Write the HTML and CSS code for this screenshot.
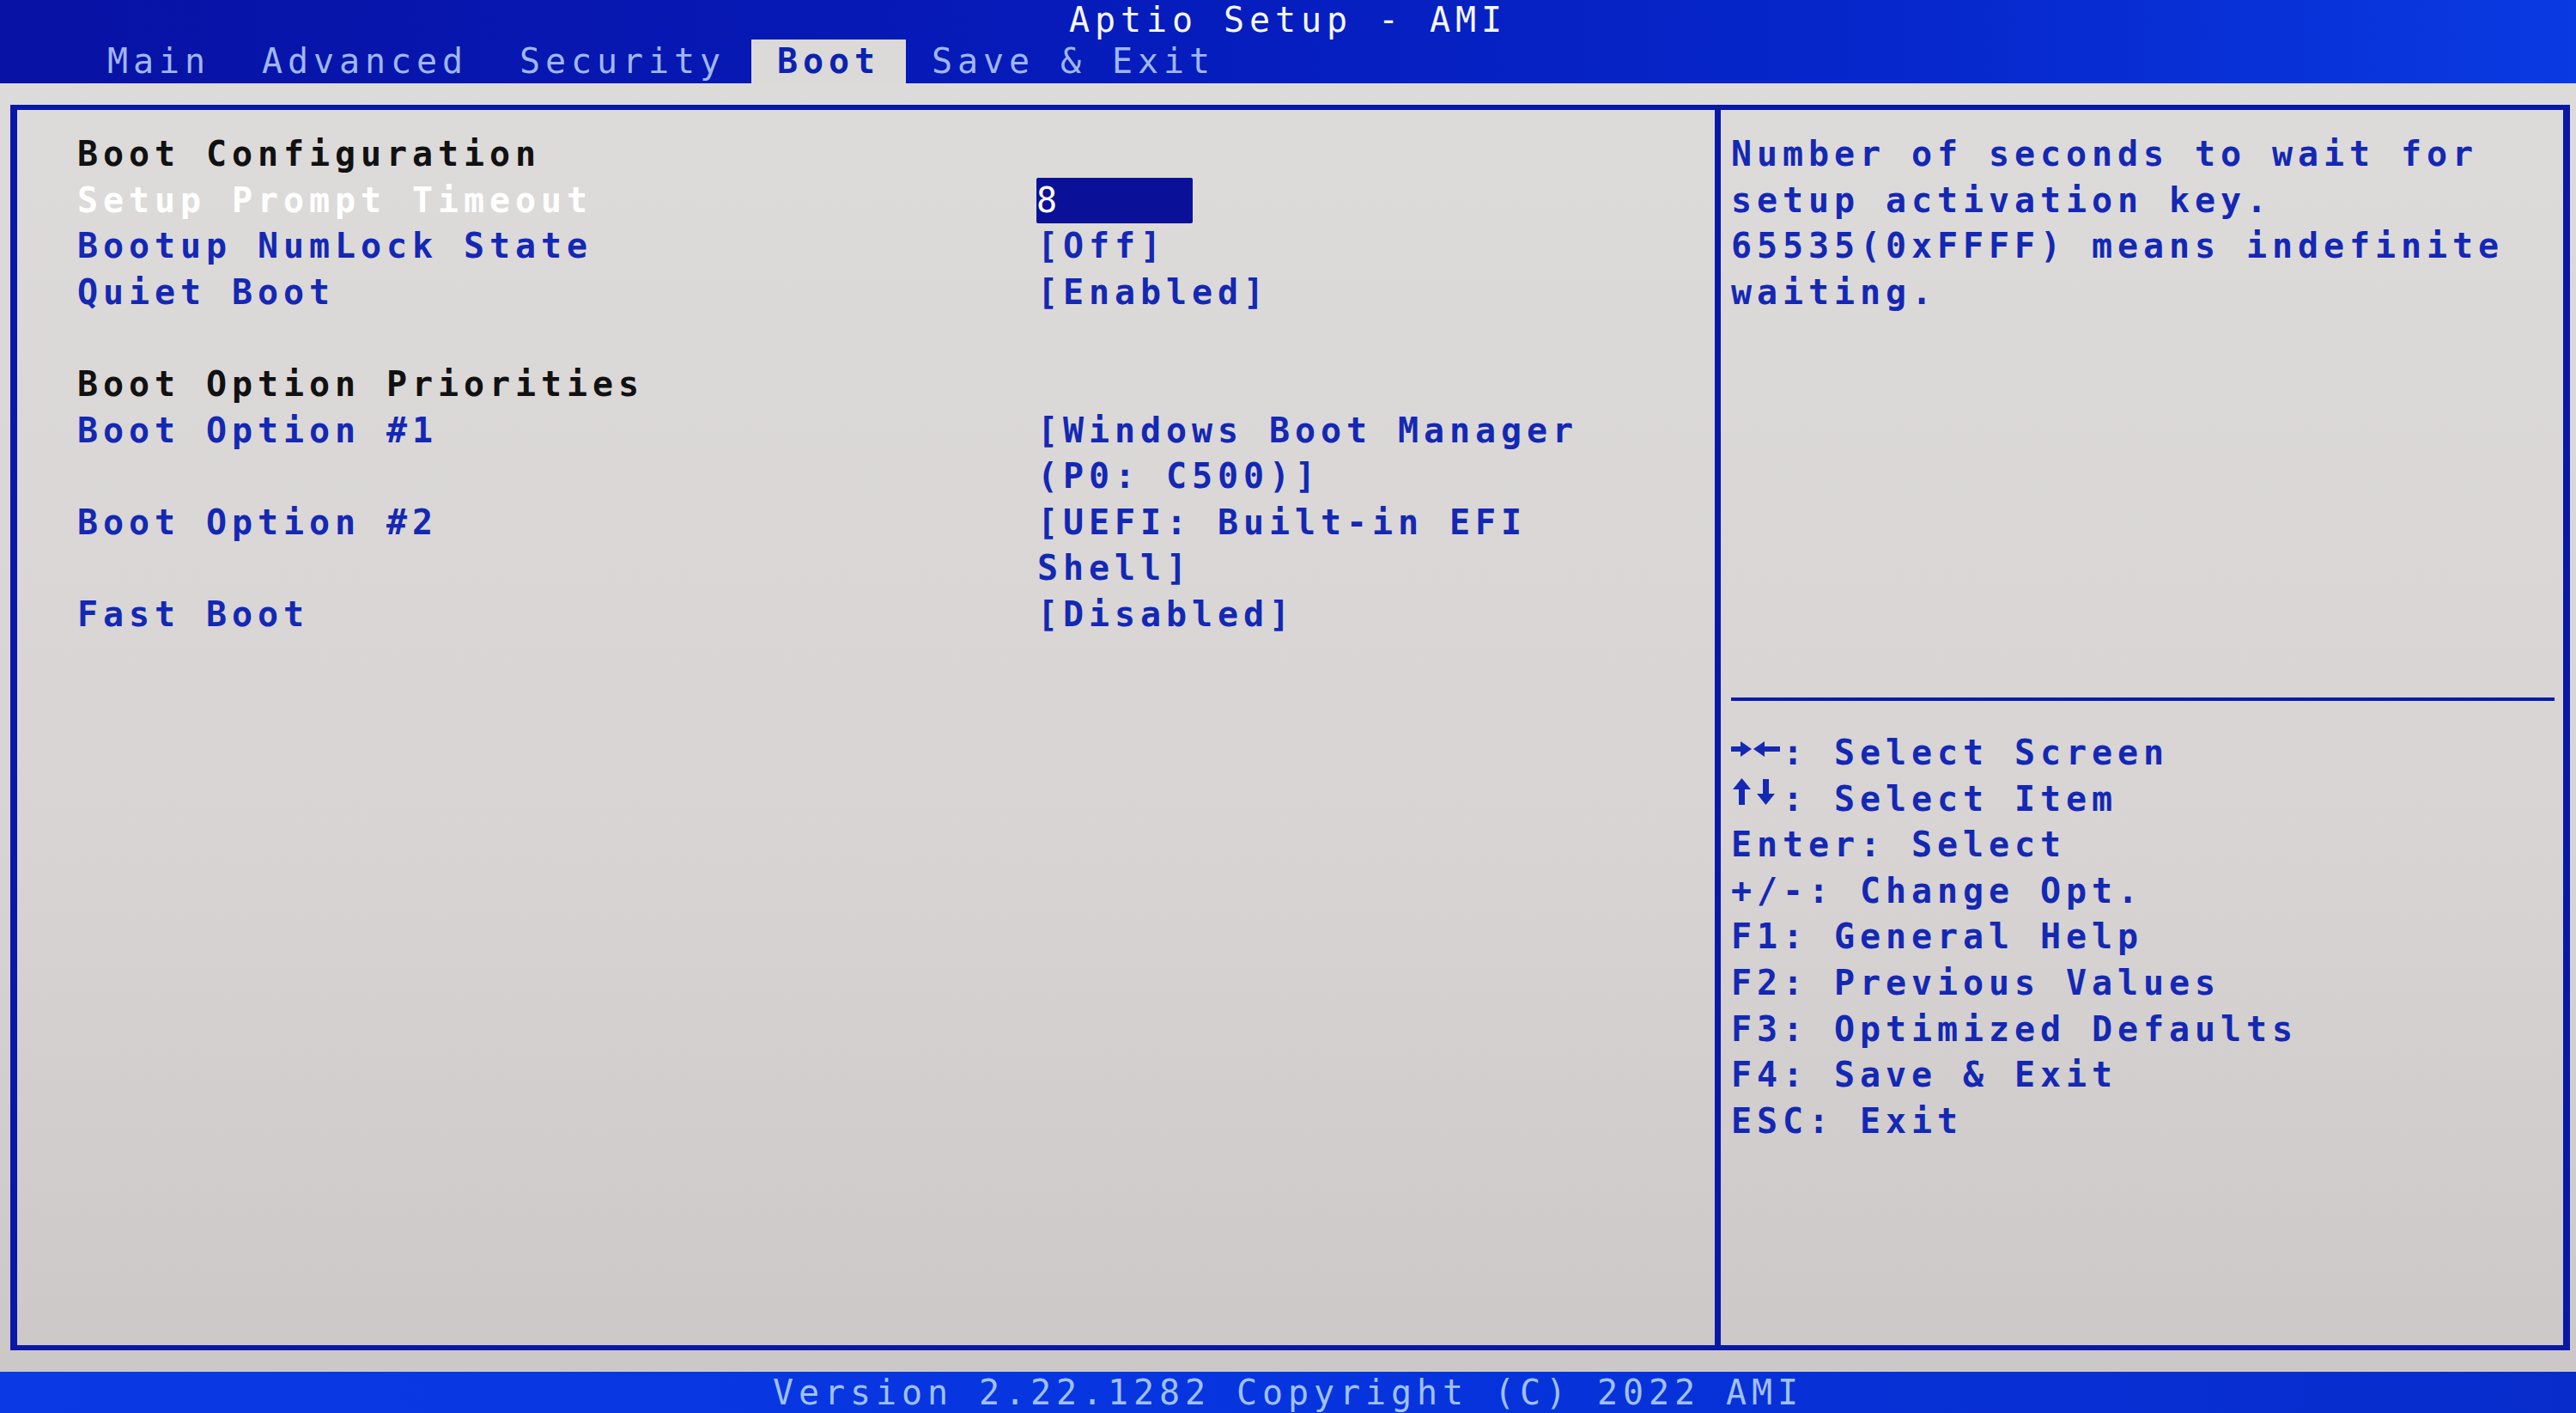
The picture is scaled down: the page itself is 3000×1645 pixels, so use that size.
FILE: index.html
```html
<!DOCTYPE html>
<html lang="en">
<head>
    <meta charset="UTF-8">
    <title>Aptio Setup - AMI</title>
    <link rel="stylesheet" href="styles.css">
</head>
<body>
    <div class="topbar">
        <div class="title">Aptio Setup - AMI</div>
        <div class="tabs">
            <span class="tab">Main</span>
            <span class="tab">Advanced</span>
            <span class="tab">Security</span>
            <span class="tab active">Boot</span>
            <span class="tab">Save &amp; Exit</span>
        </div>
    </div>

    <div class="frame">
        <div class="settings">
            <div class="heading">Boot Configuration</div>
            <div class="label selected">Setup Prompt Timeout</div>
            <div class="value"><span class="edit">8</span></div>
            <div class="label">Bootup NumLock State</div>
            <div class="value">[Off]</div>
            <div class="label">Quiet Boot</div>
            <div class="value">[Enabled]</div>
            <div class="spacer"></div>
            <div class="heading">Boot Option Priorities</div>
            <div class="label">Boot Option #1</div>
            <div class="value"><span>[Windows Boot Manager</span><span>(P0: C500)]</span></div>
            <div class="label">Boot Option #2</div>
            <div class="value"><span>[UEFI: Built-in EFI</span><span>Shell]</span></div>
            <div class="label">Fast Boot</div>
            <div class="value">[Disabled]</div>
        </div>

        <div class="side">
            <div class="help">
                <div>Number of seconds to wait for</div>
                <div>setup activation key.</div>
                <div>65535(0xFFFF) means indefinite</div>
                <div>waiting.</div>
            </div>
            <div class="rule"></div>
            <div class="keys">
                <div><svg class="arrows" width="60" height="30" viewBox="0 0 60 30">
                    <rect x="0" y="9" width="16" height="6"/>
                    <polygon points="11,3 24,12 11,21"/>
                    <polygon points="39,3 26,12 39,21"/>
                    <rect x="36" y="9" width="21" height="6"/>
                </svg>: Select Screen</div>
                <div><svg class="arrows" width="60" height="38" viewBox="0 0 60 38">
                    <rect x="9" y="9" width="7" height="22"/>
                    <polygon points="2,13 12.5,0 23,13"/>
                    <rect x="37" y="1" width="7" height="22"/>
                    <polygon points="30,18 40.5,31 51,18"/>
                </svg>: Select Item</div>
                <div>Enter: Select</div>
                <div>+/-: Change Opt.</div>
                <div>F1: General Help</div>
                <div>F2: Previous Values</div>
                <div>F3: Optimized Defaults</div>
                <div>F4: Save &amp; Exit</div>
                <div>ESC: Exit</div>
            </div>
        </div>
    </div>

    <div class="footer">Version 2.22.1282 Copyright (C) 2022 AMI</div>
</body>
</html>
```

FILE: styles.css
```css
body {
    margin: 0;
    width: 3000px;
    height: 1645px;
    overflow: hidden;
    font-family: "DejaVu Sans Mono", "Liberation Mono", monospace;
    font-size: 40px;
    font-weight: bold;
    letter-spacing: 5.92px;
    background: linear-gradient(180deg, #dedcdb 0%, #d7d4d3 60%, #cbc7c6 100%);
    color: #1428b4;
}

.topbar {
    height: 97px;
    background: linear-gradient(90deg, #0812a4 0%, #061cbc 45%, #0628cc 75%, #0a3ae2 100%);
    display: flex;
    flex-direction: column;
}

.title {
    height: 46px;
    line-height: 46px;
    text-align: center;
    color: #f4f6ff;
    font-weight: normal;
}

.tabs {
    display: flex;
    margin-left: 95px;
    height: 51px;
    line-height: 51px;
}

.tab {
    padding: 0 30px;
    color: #9fb6f2;
    font-weight: normal;
}

.tab.active {
    background: #dcdad9;
    color: #0c22b0;
    font-weight: bold;
}

.frame {
    box-sizing: border-box;
    height: 1450px;
    margin: 25px 7px 0 12px;
    border: 8px solid #0a18a6;
    border-top-width: 6px;
    border-bottom-width: 6px;
    display: grid;
    grid-template-columns: 1977px 1fr;
}

.settings {
    padding: 25px 0 0 70px;
    display: grid;
    grid-template-columns: 1118px 1fr;
    grid-auto-rows: min-content;
    line-height: 53.6px;
}

.heading {
    grid-column: 1 / -1;
    color: #111;
}

.label {
    color: #1428b4;
}

.label.selected {
    color: #ffffff;
}

.value {
    display: flex;
    flex-direction: column;
    color: #1428b4;
}

.spacer {
    grid-column: 1 / -1;
    height: 53.6px;
}

.edit {
    display: inline-block;
    align-self: flex-start;
    width: 182px;
    margin-left: -1px;
    background: #0a1198;
    color: #fff;
    font-weight: normal;
    border-radius: 2px;
}

.side {
    border-left: 7px solid #0a18a6;
    padding: 25px 10px 0 12px;
    display: flex;
    flex-direction: column;
    line-height: 53.6px;
}

.help {
    height: 659px;
}

.rule {
    height: 4px;
    background: #0a1ca8;
    margin-bottom: 34px;
}

.arrows {
    fill: #1428b4;
    vertical-align: baseline;
}

.footer {
    margin-top: 25px;
    height: 48px;
    line-height: 48px;
    text-align: center;
    background: linear-gradient(90deg, #0b3ae4 0%, #0634de 50%, #082ccc 100%);
    color: #9fc0ff;
    font-weight: normal;
}
```
